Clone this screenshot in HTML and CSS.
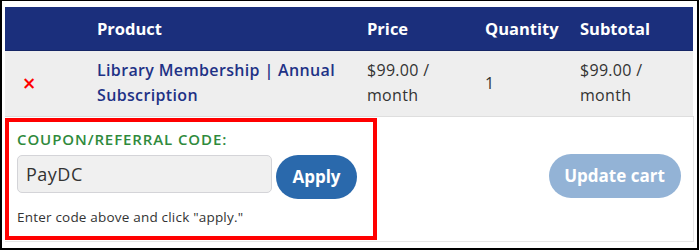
FILE: index.html
```html
<!DOCTYPE html>
<html lang="en">
<head>
<meta charset="utf-8">
<title>Cart</title>
<link rel="stylesheet" href="styles.css">
</head>
<body>
<div class="frame">
  <table class="cart">
    <colgroup>
      <col class="c-remove">
      <col class="c-product">
      <col class="c-price">
      <col class="c-qty">
      <col class="c-sub">
    </colgroup>
    <thead>
      <tr>
        <th></th>
        <th>Product</th>
        <th>Price</th>
        <th>Quantity</th>
        <th>Subtotal</th>
      </tr>
    </thead>
    <tbody>
      <tr class="item">
        <td class="remove"><span class="x">×</span></td>
        <td class="product"><a href="#">Library Membership | Annual Subscription</a></td>
        <td class="money">$99.00 / month</td>
        <td class="qty">1</td>
        <td class="money">$99.00 / month</td>
      </tr>
      <tr class="actions">
        <td colspan="5">
          <div class="actions-inner">
            <div class="coupon">
              <label class="coupon-label" for="code">COUPON/REFERRAL CODE:</label>
              <div class="coupon-row">
                <input id="code" class="coupon-input" type="text" value="PayDC">
                <button class="btn btn-apply">Apply</button>
              </div>
              <p class="hint">Enter code above and click "apply."</p>
            </div>
            <button class="btn btn-update">Update cart</button>
          </div>
          <div class="highlight"></div>
        </td>
      </tr>
    </tbody>
  </table>
</div>
</body>
</html>
```

FILE: styles.css
```css
html, body {
  margin: 0;
  padding: 0;
  background: #ffffff;
}

.frame {
  position: relative;
  box-sizing: border-box;
  width: 699px;
  height: 250px;
  border: 2px solid #000;
  border-top-width: 1px;
  padding: 6px 4px 0 3px;
  background: #fff;
  font-family: "Open Sans", "Liberation Sans", sans-serif;
  overflow: hidden;
}

.cart {
  width: 688px;
  border-collapse: collapse;
  table-layout: fixed;
}

.c-remove { width: 92px; }
.c-product { width: 270px; }
.c-price { width: 118px; }
.c-qty { width: 95px; }
.c-sub { width: 113px; }

.cart thead tr {
  background: #1b2f7c;
  height: 43px;
}

.cart th {
  color: #fff;
  font-weight: 700;
  font-size: 16.5px;
  text-align: left;
  padding: 0;
  vertical-align: middle;
  border-bottom: 1px solid #152565;
}

.item {
  background: #eeeeee;
  height: 66px;
}

.item td {
  padding: 0 24px 0 0;
  vertical-align: middle;
  font-size: 16px;
  letter-spacing: 0.3px;
  line-height: 25px;
  color: #333;
  border-bottom: 1px solid #dedede;
}

.item td.remove {
  padding: 0 0 0 17px;
}

.x {
  color: #ff0000;
  font-weight: 700;
  font-size: 17px;
  line-height: 20px;
  font-family: "DejaVu Sans", sans-serif;
}

.item td.product {
  padding-right: 4px;
}

.product a {
  color: #1e3286;
  font-weight: 600;
  letter-spacing: 0.35px;
  text-decoration: none;
}

.actions td {
  position: relative;
  padding: 0;
  border-right: 1px solid #e6e6e6;
  border-bottom: 1px solid #e6e6e6;
  height: 124px;
  vertical-align: top;
}

.actions-inner {
  display: flex;
  justify-content: space-between;
  align-items: flex-start;
  padding: 12px 12px 0 12px;
}

.coupon {
  display: flex;
  flex-direction: column;
}

.coupon-label {
  color: #2f8a3c;
  font-weight: 600;
  font-size: 15px;
  letter-spacing: 0.9px;
  line-height: 20px;
  margin-bottom: 6px;
}

.coupon-row {
  display: flex;
  align-items: flex-start;
  gap: 4px;
}

.coupon-input {
  box-sizing: border-box;
  width: 255px;
  height: 38px;
  border: 1px solid #d4d4d8;
  border-radius: 5px;
  background: #f0f0f0;
  padding: 0 8px;
  font-family: inherit;
  font-size: 18px;
  letter-spacing: 0.5px;
  color: #333;
  margin: 0;
}

.btn {
  border: none;
  border-radius: 22px;
  height: 44px;
  color: #fff;
  font-family: inherit;
  font-weight: 700;
  font-size: 17px;
  padding: 0;
  margin: 0;
  cursor: pointer;
}

.btn-apply {
  width: 81px;
  background: #2a69ac;
}

.btn-update {
  width: 132px;
  background: #93b3d6;
  margin-top: 25px;
}

.hint {
  margin: 9px 0 0 0;
  font-size: 13.5px;
  letter-spacing: 0.2px;
  line-height: 18px;
  color: #333;
}

.highlight {
  position: absolute;
  left: 0;
  top: 1px;
  width: 372px;
  height: 122px;
  box-sizing: border-box;
  border: 4px solid #ff0000;
  pointer-events: none;
}
```
